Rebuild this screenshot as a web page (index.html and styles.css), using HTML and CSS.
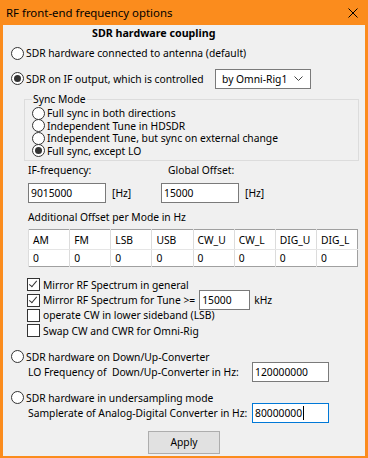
FILE: index.html
```html
<!DOCTYPE html>
<html lang="en">

<head>
    <meta name="viewport" content="width=device-width, initial-scale=1.0">
    <link rel="stylesheet" href="styles.css">
    <title>RF front-end frequency options</title>
</head>

<body>
    <div class="window">
        <div class="titlebar">
            <span class="title">RF front-end frequency options</span>
            <svg class="close" width="10" height="10" viewBox="0 0 10 10">
                <path d="M0.5 0.5 L9.5 9.5 M9.5 0.5 L0.5 9.5" stroke="#000" stroke-width="1" fill="none"/>
            </svg>
        </div>

        <div class="content">
            <div class="heading">SDR hardware coupling</div>

            <div class="option-row first">
                <span class="radio"></span>
                <span>SDR hardware connected to antenna (default)</span>
            </div>

            <div class="option-row second">
                <span class="radio checked"></span>
                <span>SDR on IF output, which is controlled</span>
                <div class="select">
                    <span>by Omni-Rig1</span>
                    <svg width="9" height="5" viewBox="0 0 9 5">
                        <path d="M0.5 0.5 L4.5 4.5 L8.5 0.5" stroke="#444" stroke-width="1" fill="none"/>
                    </svg>
                </div>
            </div>

            <fieldset class="sync">
                <legend>Sync Mode</legend>
                <div class="sync-row"><span class="radio"></span>Full sync in both directions</div>
                <div class="sync-row"><span class="radio"></span>Independent Tune in HDSDR</div>
                <div class="sync-row"><span class="radio"></span>Independent Tune, but sync on external change</div>
                <div class="sync-row"><span class="radio checked"></span>Full sync, except LO</div>
            </fieldset>

            <div class="offsets">
                <div class="offset-col">
                    <div class="offset-label">IF-frequency:</div>
                    <div class="offset-field">
                        <div class="textbox wide">9015000</div>
                        <span>[Hz]</span>
                    </div>
                </div>
                <div class="offset-col">
                    <div class="offset-label shifted">Global Offset:</div>
                    <div class="offset-field">
                        <div class="textbox wide">15000</div>
                        <span>[Hz]</span>
                    </div>
                </div>
            </div>

            <div class="caption">Additional Offset per Mode in Hz</div>

            <table class="modes">
                <thead>
                    <tr>
                        <th>AM</th>
                        <th>FM</th>
                        <th>LSB</th>
                        <th>USB</th>
                        <th>CW_U</th>
                        <th>CW_L</th>
                        <th>DIG_U</th>
                        <th>DIG_L</th>
                    </tr>
                </thead>
                <tbody>
                    <tr>
                        <td>0</td>
                        <td>0</td>
                        <td>0</td>
                        <td>0</td>
                        <td>0</td>
                        <td>0</td>
                        <td>0</td>
                        <td>0</td>
                    </tr>
                </tbody>
            </table>

            <div class="checks">
                <div class="check-row"><span class="checkbox checked"></span>Mirror RF Spectrum in general</div>
                <div class="check-row">
                    <span class="checkbox checked"></span>Mirror RF Spectrum for Tune &gt;=
                    <div class="textbox small">15000</div>
                    <span>kHz</span>
                </div>
                <div class="check-row"><span class="checkbox"></span>operate CW in lower sideband (LSB)</div>
                <div class="check-row"><span class="checkbox"></span>Swap CW and CWR for Omni-Rig</div>
            </div>

            <div class="hardware converter">
                <div class="option-row"><span class="radio"></span>SDR hardware on Down/Up-Converter</div>
                <div class="sub-row">
                    <span class="sub-label">LO Frequency of&nbsp; Down/Up-Converter in Hz:</span>
                    <div class="textbox long">120000000</div>
                </div>
            </div>

            <div class="hardware sampling">
                <div class="option-row"><span class="radio"></span>SDR hardware in undersampling mode</div>
                <div class="sub-row">
                    <span class="sub-label">Samplerate of Analog-Digital Converter in Hz:</span>
                    <div class="textbox long focused">80000000<span class="caret"></span></div>
                </div>
            </div>

            <div class="actions">
                <button class="apply">Apply</button>
            </div>
        </div>
    </div>
</body>

</html>
```

FILE: styles.css
```css
body {
    margin: 0;
    padding: 0;
    font-family: "Noto Sans", sans-serif;
    font-size: 10.3px;
    line-height: 12px;
    color: #000;
    white-space: nowrap;
}

.window {
    width: 368px;
    height: 458px;
    box-sizing: border-box;
    background-color: #f0f0f0;
    border: 3px solid #fb8c1d;
    border-top: 0;
    border-bottom-width: 2px;
    display: flex;
    flex-direction: column;
}

.titlebar {
    height: 25px;
    margin: 0 -3px;
    padding: 0 10px 0 6px;
    background-color: #fb8c1d;
    display: flex;
    align-items: center;
    justify-content: space-between;
}

.title {
    font-size: 11.4px;
    line-height: 14px;
}

.content {
    padding-left: 8px;
}

.heading {
    height: 16px;
    line-height: 16px;
    padding-left: 81px;
    font-size: 10.7px;
    font-weight: bold;
}

.option-row {
    display: flex;
    align-items: center;
    height: 16px;
}

.option-row.first {
    margin-top: 3px;
    height: 18px;
}

.option-row.second {
    margin-top: 6px;
    height: 21px;
}

.radio {
    width: 11px;
    height: 11px;
    border: 1px solid #333;
    border-radius: 50%;
    background-color: #fff;
    margin-right: 2px;
    flex-shrink: 0;
    display: flex;
    align-items: center;
    justify-content: center;
}

.radio.checked::after {
    content: "";
    width: 7px;
    height: 7px;
    border-radius: 50%;
    background-color: #333;
}

.checkbox {
    width: 11px;
    height: 11px;
    border: 1px solid #333;
    background-color: #fff;
    margin-right: 3px;
    flex-shrink: 0;
    position: relative;
}

.checkbox.checked::after {
    content: "";
    position: absolute;
    left: 3px;
    top: 0px;
    width: 3px;
    height: 7px;
    border: solid #333;
    border-width: 0 1px 1px 0;
    transform: rotate(40deg);
}

.select {
    margin-left: auto;
    margin-right: 54px;
    height: 18px;
    width: 81px;
    border: 1px solid #7a7a7a;
    background-color: #fff;
    display: flex;
    align-items: center;
    justify-content: space-between;
    padding: 0 7px 0 6px;
}

.sync {
    margin: 3px 0 0 13px;
    width: 335px;
    box-sizing: border-box;
    border: 1px solid #dcdcdc;
    padding: 1px 0 3px 7px;
}

.sync legend {
    padding: 0 1px;
    line-height: 14px;
}

.sync-row {
    display: flex;
    align-items: center;
    height: 12.5px;
}

.offsets {
    display: flex;
    margin: 2px 0 0 17px;
}

.offset-col {
    width: 133px;
}

.offset-label {
    height: 14px;
    line-height: 14px;
}

.offset-label.shifted {
    margin-left: 7px;
}

.offset-field {
    display: flex;
    align-items: center;
    margin-top: 6px;
}

.offset-field span {
    margin-left: 6px;
}

.textbox {
    height: 18px;
    line-height: 18px;
    border: 1px solid #7a7a7a;
    background-color: #fff;
    padding-left: 2px;
}

.textbox.wide {
    width: 74px;
}

.textbox.small {
    width: 47px;
    margin: -3px 4px -3px 4px;
}

.textbox.long {
    width: 73px;
    margin: -3px 0;
}

.textbox.focused {
    border-color: #0078d7;
    display: flex;
    align-items: center;
}

.caret {
    width: 1px;
    height: 14px;
    background-color: #000;
    margin-left: 1px;
}

.caption {
    margin: 7px 0 0 17px;
    height: 14px;
    line-height: 14px;
}

.modes {
    margin: 5px 0 0 17px;
    width: 330px;
    border-collapse: collapse;
    table-layout: fixed;
    background-color: #fff;
    border: 1px solid #a0a0a0;
}

.modes th,
.modes td {
    text-align: left;
    font-weight: normal;
    padding: 0 0 0 4px;
    border-left: 1px solid #dcdcdc;
}

.modes th {
    height: 19px;
    border-bottom: 1px solid #e5e5e5;
}

.modes td {
    height: 16px;
}

.checks {
    margin: 10px 0 0 16px;
}

.check-row {
    display: flex;
    align-items: center;
    height: 15.4px;
}

.hardware {
    margin-top: 10px;
}

.hardware.sampling {
    margin-top: 11px;
}

.sub-row {
    display: flex;
    align-items: center;
    height: 14px;
    padding-left: 17px;
}

.sub-label {
    width: 224px;
}

.actions {
    display: flex;
    justify-content: center;
    margin-top: 11px;
    padding-right: 8px;
}

.apply {
    width: 72px;
    height: 23px;
    background-color: #e1e1e1;
    border: 1px solid #adadad;
    font-family: "Noto Sans", sans-serif;
    font-size: 10.3px;
    color: #000;
    padding: 0;
}
```
